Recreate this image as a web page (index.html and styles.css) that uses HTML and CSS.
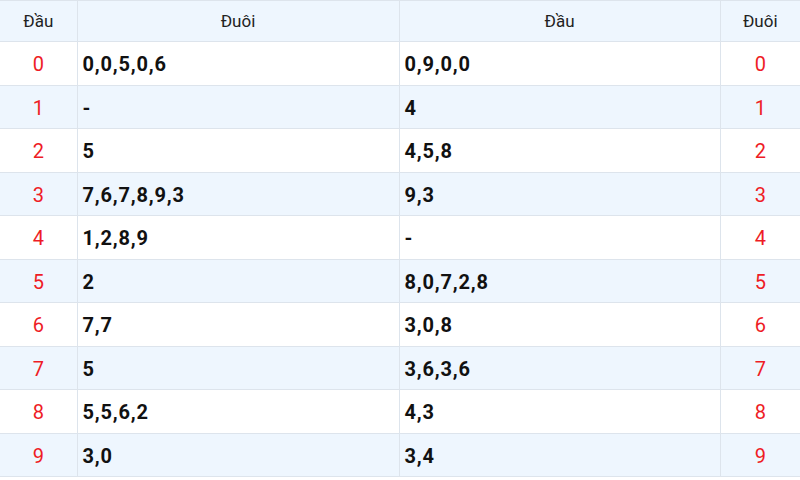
FILE: index.html
```html
<!DOCTYPE html>
<html>
<head>
<meta charset="utf-8">
<link rel="stylesheet" href="styles.css">
</head>
<body>
<table class="lt">
  <colgroup>
    <col class="c-num"><col class="c-val"><col class="c-val2"><col class="c-num2">
  </colgroup>
  <thead>
    <tr class="hr"><th>Đầu</th><th>Đuôi</th><th>Đầu</th><th>Đuôi</th></tr>
  </thead>
  <tbody>
    <tr><td class="n">0</td><td class="v">0,0,5,0,6</td><td class="v">0,9,0,0</td><td class="n">0</td></tr>
    <tr><td class="n">1</td><td class="v">-</td><td class="v">4</td><td class="n">1</td></tr>
    <tr><td class="n">2</td><td class="v">5</td><td class="v">4,5,8</td><td class="n">2</td></tr>
    <tr><td class="n">3</td><td class="v">7,6,7,8,9,3</td><td class="v">9,3</td><td class="n">3</td></tr>
    <tr><td class="n">4</td><td class="v">1,2,8,9</td><td class="v">-</td><td class="n">4</td></tr>
    <tr><td class="n">5</td><td class="v">2</td><td class="v">8,0,7,2,8</td><td class="n">5</td></tr>
    <tr><td class="n">6</td><td class="v">7,7</td><td class="v">3,0,8</td><td class="n">6</td></tr>
    <tr><td class="n">7</td><td class="v">5</td><td class="v">3,6,3,6</td><td class="n">7</td></tr>
    <tr><td class="n">8</td><td class="v">5,5,6,2</td><td class="v">4,3</td><td class="n">8</td></tr>
    <tr><td class="n">9</td><td class="v">3,0</td><td class="v">3,4</td><td class="n">9</td></tr>
  </tbody>
</table>
</body>
</html>
```
FILE: styles.css
```css
html, body {
  margin: 0;
  padding: 0;
  background: #fff;
}
body {
  font-family: Roboto, "Liberation Sans", sans-serif;
}
.lt {
  width: 800px;
  border-collapse: collapse;
  table-layout: fixed;
}
.c-num { width: 77px; }
.c-val { width: 322px; }
.c-val2 { width: 321px; }
.c-num2 { width: 80px; }
.lt th, .lt td {
  border: 1px solid #dde4ec;
  padding: 0 5px;
}
.lt tr > :first-child { border-left: none; }
.lt tr > :last-child { border-right: none; }
.lt .hr { height: 41px; }
.lt tbody tr { height: 43.5px; }
.lt th {
  font-weight: 400;
  font-size: 17px;
  color: #222;
  background: #eef6fe;
  text-align: center;
}
.lt td {
  font-size: 20px;
  padding-top: 2px;
}
.lt tbody tr:nth-child(even) td { background: #eef6fe; }
.n {
  text-align: center;
  color: #ee1c25;
}
.v {
  font-weight: 700;
  color: #111;
  letter-spacing: 0.8px;
}
```
